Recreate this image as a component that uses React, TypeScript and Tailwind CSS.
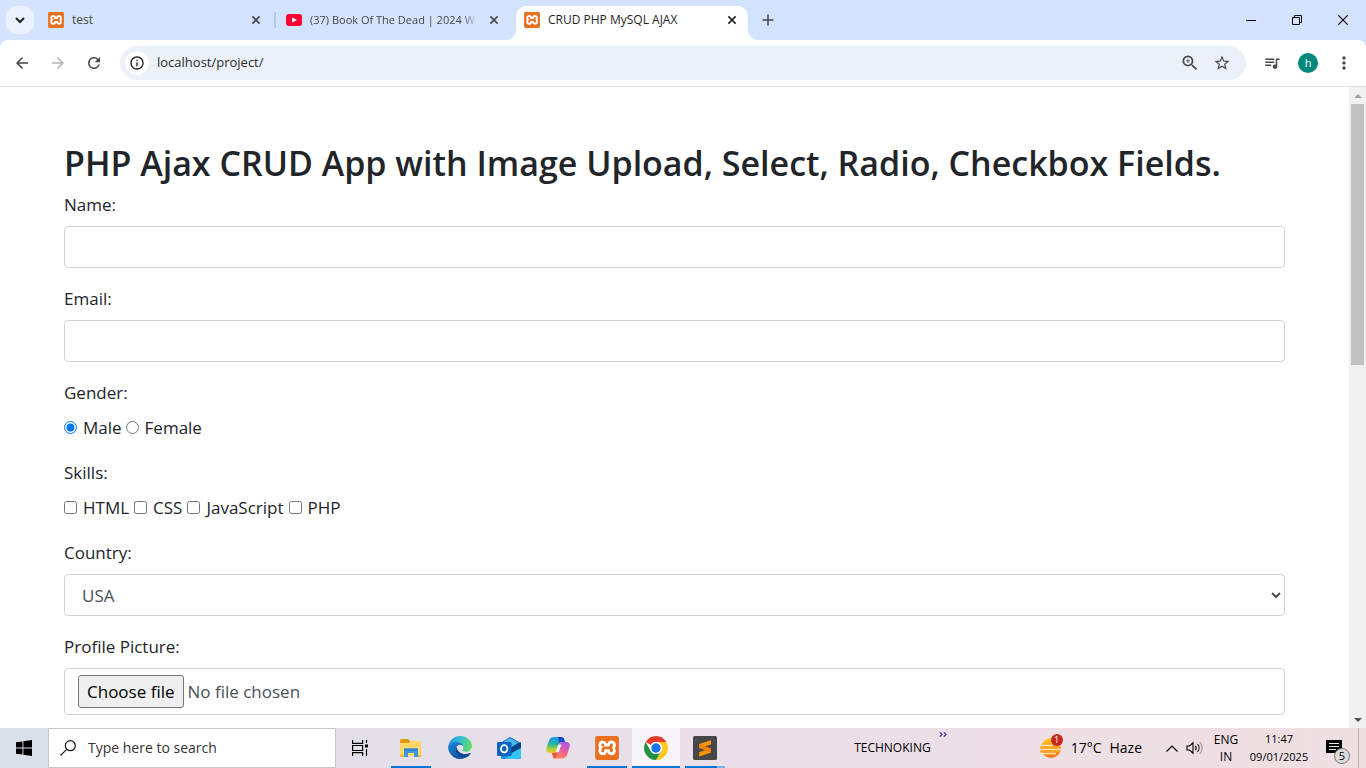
import type { ReactNode } from 'react';
import {
  MdArrowBack,
  MdArrowForward,
  MdMoreVert,
  MdOutlineInfo,
  MdQueueMusic,
  MdRefresh,
  MdStarBorder,
  MdZoomIn,
} from 'react-icons/md';
import { SiXampp } from 'react-icons/si';

/* ---------- Icons ---------- */

function XamppIcon({ large = false }: { large?: boolean }) {
  return (
    <span className={large ? 'flex size-6 rounded-sm bg-white' : 'flex size-4 rounded-sm bg-white'}>
      <SiXampp className="size-full text-[#e8701f]" />
    </span>
  );
}

function YoutubeIcon() {
  return (
    <svg viewBox="0 0 16 16" className="size-4">
      <rect x="0" y="2" width="16" height="12" rx="3" fill="#ff0033" />
      <path d="M6.2 5.4 11 8l-4.8 2.6z" fill="#fff" />
    </svg>
  );
}

function CloseIcon() {
  return (
    <svg viewBox="0 0 16 16" className="size-4" fill="none" stroke="currentColor" strokeWidth="1.6">
      <path d="m4.4 4.4 7.2 7.2M11.6 4.4l-7.2 7.2" />
    </svg>
  );
}

function ExplorerIcon() {
  return (
    <svg viewBox="0 0 24 24" className="size-6">
      <path d="M1 4.5A1.5 1.5 0 0 1 2.500 3H9l2 2v4H1z" fill="#e29c0a" />
      <path d="M1 7h9l2-2h9a1.200 1.200 0 0 1 1.200 1.200V20H1z" fill="#ffd766" />
      <path d="M5 12.500h14V21h-4v-4H9v4H5z" fill="#3f97dc" />
      <path d="M5 12.500h14v2.500H5z" fill="#2f86cf" />
      <path d="M1 19h4v2H2a1 1 0 0 1-1-1zM19 19h3.200v1a1 1 0 0 1-1 1H19z" fill="#f3b93a" />
    </svg>
  );
}

function EdgeIcon() {
  return (
    <svg viewBox="0 0 24 24" className="size-6">
      <defs>
        <linearGradient id="edgeTop" x1="0" y1="0.300" x2="1" y2="0.500">
          <stop offset="0" stopColor="#2196dc" />
          <stop offset="0.500" stopColor="#35c1d0" />
          <stop offset="1" stopColor="#66dc5c" />
        </linearGradient>
        <linearGradient id="edgeLow" x1="0" y1="0" x2="0.600" y2="1">
          <stop offset="0" stopColor="#1b8be0" />
          <stop offset="1" stopColor="#0d4fa0" />
        </linearGradient>
      </defs>
      <path d="M.3 10.500C1.200 4.500 6 0 12 0c7 0 12 5 12 10 0 3.500-2.800 5.800-6 5.800-2.500 0-3.600-.8-3.600-1.500 0-.5 1-1 1-2.800 0-2.600-2.800-4.700-6.400-4.700C5.500 6.800 2 8 .3 10.500z" fill="url(#edgeTop)" />
      <path d="M.1 12c0-4.200 4-6 8-6 4.200 0 7.300 2.400 7.300 5.500 0-1.600-1.700-2.700-3.400-2.700-2.500 0-4.200 2.400-4.200 5.400 0 4.800 4.400 8.300 9 7.900A12 12 0 0 1 .1 12z" fill="url(#edgeLow)" />
      <path d="M8.600 10.900c-1 1.200-1.200 2.700-.9 4.500.8 4.500 5 7.500 9.200 6.700 2.500-.8 4.500-2.400 5.700-4.500.3-.5-.1-.8-.6-.6-6.400 2.700-12.900-.7-13.400-6.100z" fill="#0c4a94" />
    </svg>
  );
}

function OutlookIcon() {
  return (
    <svg viewBox="0 0 24 24" className="size-6">
      <path d="M3 7 13 1l10 5.500V12H3z" fill="#1672c4" />
      <path d="M7 5.500 13 2l8 4.500-7 5.500H7z" fill="#4db3ee" />
      <path d="M4 11h10l10-2v12.500a1.500 1.500 0 0 1-1.500 1.500H5.500A1.500 1.500 0 0 1 4 21.500z" fill="#1d8fe0" />
      <path d="M24 11v10.500a1.500 1.500 0 0 1-1.500 1.500H8z" fill="#35c3f2" />
      <path d="M14 11.500 24 6v6l-10 5z" fill="#0a4182" />
      <rect x="0" y="6" width="14.500" height="14" rx="1.200" fill="#0b64bd" />
      <ellipse cx="7.200" cy="12.800" rx="3.200" ry="3.600" fill="none" stroke="#fff" strokeWidth="1.800" />
    </svg>
  );
}

function CopilotIcon() {
  return (
    <svg viewBox="0 0 24 24" className="size-6">
      <defs>
        <linearGradient id="copilotLeft" x1="0.500" y1="0" x2="0.400" y2="1">
          <stop offset="0" stopColor="#1c9af0" />
          <stop offset="0.450" stopColor="#22b5a0" />
          <stop offset="0.750" stopColor="#a8cf3c" />
          <stop offset="1" stopColor="#f5c62a" />
        </linearGradient>
        <linearGradient id="copilotRight" x1="0.700" y1="0" x2="0.300" y2="1">
          <stop offset="0" stopColor="#a45be8" />
          <stop offset="0.500" stopColor="#ee5c9c" />
          <stop offset="1" stopColor="#fb8a4a" />
        </linearGradient>
      </defs>
      <path d="M8 1h7.500c1.500 0 2.300 1 2.700 2.400L19 6h-3.500c-1.500 0-2 .8-2.500 2.300l-2 6C10.300 16 9.500 17 8 17H3.500C.8 17-.3 15 .4 12.200L3 4.500C3.800 2.200 5.500 1 8 1z" fill="url(#copilotLeft)" />
      <path d="M12 1h3.500c1.500 0 2.300 1 2.700 2.400L19 6h-3.500c-1.300 0-1.900.6-2.300 1.700z" fill="#1b49c8" />
      <path d="M16 22.500H9.500c-1.600 0-2.300-1-2.700-2.400L6 17h2.500c1.500 0 2.200-1 2.700-2.500l2.100-6.200C13.800 6.800 14.500 6 16 6h4.500c2.800 0 3.800 2.200 3.100 5L21 19c-.9 2.300-2.500 3.500-5 3.500z" fill="url(#copilotRight)" />
      <path d="m15.500 8.500-2.800 7.800h-3.200l2.800-7.800z" fill="#f6eef4" />
      <path d="M6 17h2.500c1.300 0 2-.7 2.500-1.900l-1 7.400c-1.800 0-2.800-.9-3.200-2.400z" fill="#f0553e" />
    </svg>
  );
}

function ChromeIcon() {
  return (
    <svg viewBox="0 0 24 24" className="size-6">
      <circle cx="12" cy="12" r="12" fill="#fff" />
      <path d="M12 0a12 12 0 0 1 10.390 6H12a6 6 0 0 0-5.200 3L1.610 6A12 12 0 0 1 12 0z" fill="#e33b2e" />
      <path d="M22.390 6A12 12 0 0 1 12 24l5.200-9A6 6 0 0 0 12 6z" fill="#fcc81f" />
      <path d="M12 24A12 12 0 0 1 1.610 6l5.190 9a6 6 0 0 0 10.400 0z" fill="#229342" />
      <circle cx="12" cy="12" r="6" fill="#fff" />
      <circle cx="12" cy="12" r="4.700" fill="#1a73e8" />
    </svg>
  );
}

function SublimeIcon() {
  return (
    <svg viewBox="0 0 24 24" className="size-6">
      <rect width="24" height="24" rx="1.500" fill="#474747" />
      <path d="M18 4.200v4.300l-6.500 2.100L18 12.700v3.900L6.200 20.400v-4.200l6.300-2.100-6.300-2V8z" fill="#ff9800" />
      <path d="M6.200 8 18 12.300v4.200L6.200 12.100z" fill="#f57f00" />
    </svg>
  );
}

function WeatherIcon() {
  return (
    <svg viewBox="0 0 24 24" className="size-6">
      <defs>
        <linearGradient id="sun" x1="0" y1="0" x2="0" y2="1">
          <stop offset="0" stopColor="#ffc928" />
          <stop offset="1" stopColor="#f2740f" />
        </linearGradient>
      </defs>
      <circle cx="12" cy="12" r="10" fill="url(#sun)" />
      <path d="M1 9.500h13M3 13.500h19M0 17.500h17" stroke="#fbe3a8" strokeWidth="1.300" />
      <path d="M1 11.300h9M1 15.500h19" stroke="#f5a52a" strokeWidth="1.500" />
    </svg>
  );
}

/* ---------- Browser window ---------- */

interface TabProps {
  title: string;
  icon: ReactNode;
  active?: boolean;
  fade?: boolean;
}

function Tab({ title, icon, active = false, fade = false }: TabProps) {
  return (
    <div
      role="tab"
      aria-selected={active}
      className={
        active
          ? 'relative flex h-[34px] w-[232px] items-center gap-2 rounded-t-[10px] bg-white px-2 pb-[6px] text-[#1f1f1f]'
          : 'flex h-[34px] w-[232px] items-center gap-2 px-2 pb-[6px] text-[#474747]'
      }
    >
      {active && (
        <>
          <svg viewBox="0 0 10 10" className="absolute bottom-0 -left-2.5 size-2.5">
            <path d="M10 0v10H0A10 10 0 0 0 10 0z" fill="#fff" />
          </svg>
          <svg viewBox="0 0 10 10" className="absolute -right-2.5 bottom-0 size-2.5">
            <path d="M0 0v10h10A10 10 0 0 1 0 0z" fill="#fff" />
          </svg>
        </>
      )}
      {icon}
      <span
        className={
          fade
            ? 'min-w-0 flex-1 text-[11px] whitespace-nowrap mask-r-from-90%'
            : 'min-w-0 flex-1 text-xs whitespace-nowrap'
        }
      >
        {title}
      </span>
      <button type="button" aria-label={`Close ${title}`}>
        <CloseIcon />
      </button>
    </div>
  );
}

function TabStrip() {
  return (
    <div className="flex h-10 shrink-0 items-start bg-[#d3e3fd]">
      <div className="flex flex-1 items-start pt-1.5 pl-1.5">
        <button
          type="button"
          aria-label="Search tabs"
          className="flex size-7 items-center justify-center rounded-[10px] bg-[#ebf2fe]"
        >
          <svg viewBox="0 0 10 10" className="size-2.5" fill="none" stroke="#1f1f1f" strokeWidth="2">
            <path d="m1 3 4 4 4-4" />
          </svg>
        </button>
        <div role="tablist" className="flex gap-1.5 pl-1.5">
          <Tab title="test" icon={<XamppIcon />} />
          <div className="-mx-1 mt-1.5 h-4 w-0.5 rounded bg-[#a8c7fa]" />
          <Tab title="(37) Book Of The Dead | 2024 W" icon={<YoutubeIcon />} fade />
          <Tab title="CRUD PHP MySQL AJAX" icon={<XamppIcon />} active />
        </div>
        <button type="button" aria-label="New tab" className="ml-1.5 flex size-7 items-center justify-center">
          <svg viewBox="0 0 12 12" className="size-3" stroke="#474747" strokeWidth="1.600">
            <path d="M6 .5v11M.5 6h11" />
          </svg>
        </button>
      </div>
      <div className="flex h-10">
        <button type="button" aria-label="Minimize" className="flex w-[46px] items-center justify-center">
          <svg viewBox="0 0 10 10" className="size-2.5">
            <path d="M0 5h10v1H0z" />
          </svg>
        </button>
        <button type="button" aria-label="Restore" className="flex w-[46px] items-center justify-center">
          <svg viewBox="0 0 10 10" className="size-2.5" fill="none" stroke="#000">
            <path d="M.5 2.500h7v7h-7zM2.500 2.500v-2h7v7h-2" />
          </svg>
        </button>
        <button type="button" aria-label="Close window" className="flex w-[46px] items-center justify-center">
          <svg viewBox="0 0 10 10" className="size-2.5" stroke="#000" strokeWidth="1.100">
            <path d="m0 0 10 10M10 0 0 10" />
          </svg>
        </button>
      </div>
    </div>
  );
}

function ToolButton({ label, children }: { label: string; children: ReactNode }) {
  return (
    <button type="button" aria-label={label} className="flex h-9 w-9 items-center justify-center text-[#474747]">
      {children}
    </button>
  );
}

function Toolbar() {
  return (
    <div className="shrink-0 bg-[#d3e3fd]">
      <div className="flex h-[47px] items-center rounded-t-lg border-b border-[#dfe1e5] bg-white pl-1">
        <ToolButton label="Back">
          <MdArrowBack className="size-[18px]" />
        </ToolButton>
        <ToolButton label="Forward">
          <MdArrowForward className="size-[18px] text-[#b3b3b3]" />
        </ToolButton>
        <ToolButton label="Reload">
          <MdRefresh className="size-[18px]" />
        </ToolButton>
        <div className="ml-2 flex h-[34px] flex-1 items-center rounded-full bg-[#ecf0f9] pr-2 pl-[5px]">
          <button
            type="button"
            aria-label="View site information"
            className="flex size-6 items-center justify-center rounded-full bg-white text-[#1f1f1f]"
          >
            <MdOutlineInfo className="size-4" />
          </button>
          <input
            type="text"
            aria-label="Address and search bar"
            defaultValue="localhost/project/"
            className="ml-2 min-w-0 flex-1 bg-transparent text-[13px] text-[#2b2b2b] outline-none"
          />
          <button type="button" aria-label="Zoom" className="flex w-8 justify-center text-[#474747]">
            <MdZoomIn className="size-5" />
          </button>
          <button type="button" aria-label="Bookmark this tab" className="flex w-8 justify-center text-[#474747]">
            <MdStarBorder className="size-[18px]" />
          </button>
        </div>
        <div className="flex pl-2 pr-1">
          <ToolButton label="Media controls">
            <MdQueueMusic className="size-[18px]" />
          </ToolButton>
          <ToolButton label="Profile">
            <span className="flex size-5 items-center justify-center rounded-full bg-[#00897b] text-[11px] text-white">
              h
            </span>
          </ToolButton>
          <ToolButton label="Menu">
            <MdMoreVert className="size-5" />
          </ToolButton>
        </div>
      </div>
    </div>
  );
}

/* ---------- Page content ---------- */

const fieldClass = 'h-[42px] w-full rounded border border-[#ced4da] bg-white px-[13px] text-[#495057] outline-none';
const labelClass = 'mb-2 block leading-[26px]';

function Choice({ type, name, label, checked }: { type: 'radio' | 'checkbox'; name: string; label: string; checked?: boolean }) {
  return (
    <label className="flex items-center gap-1.5">
      <input type={type} name={name} defaultChecked={checked} className="mb-0.5 size-[13px]" />
      {label}
    </label>
  );
}

function CrudForm() {
  return (
    <form className="flex flex-col gap-[18px] text-[17px] text-[#212529]">
      <div>
        <label htmlFor="name" className={labelClass}>Name:</label>
        <input id="name" type="text" className={fieldClass} />
      </div>
      <div>
        <label htmlFor="email" className={labelClass}>Email:</label>
        <input id="email" type="email" className={fieldClass} />
      </div>
      <fieldset>
        <legend className={labelClass}>Gender:</legend>
        <div className="flex h-7 items-center gap-1">
          <Choice type="radio" name="gender" label="Male" checked />
          <Choice type="radio" name="gender" label="Female" />
        </div>
      </fieldset>
      <fieldset>
        <legend className={labelClass}>Skills:</legend>
        <div className="flex h-7 items-center gap-[5px]">
          <Choice type="checkbox" name="skills" label="HTML" />
          <Choice type="checkbox" name="skills" label="CSS" />
          <Choice type="checkbox" name="skills" label="JavaScript" />
          <Choice type="checkbox" name="skills" label="PHP" />
        </div>
      </fieldset>
      <div>
        <label htmlFor="country" className={labelClass}>Country:</label>
        <select id="country" className={fieldClass}>
          <option>USA</option>
        </select>
      </div>
      <div>
        <label htmlFor="picture" className={labelClass}>Profile Picture:</label>
        <div className="flex h-[47px] items-center gap-1 rounded border border-[#ced4da] px-[13px] text-[#495057]">
          <input id="picture" type="file" className="sr-only" />
          <label
            htmlFor="picture"
            className="flex h-[33px] items-center rounded-[3px] border border-[#767676] bg-[#efefef] px-2 text-black"
          >
            Choose file
          </label>
          <span>No file chosen</span>
        </div>
      </div>
    </form>
  );
}

function Scrollbar() {
  return (
    <div className="flex w-[17px] shrink-0 flex-col bg-[#f1f1f1]">
      <div className="flex h-[17px] items-center justify-center">
        <svg viewBox="0 0 8 4" className="h-1 w-2" fill="#a3a3a3">
          <path d="M4 0 8 4H0z" />
        </svg>
      </div>
      <div className="flex-1 px-0.5">
        <div className="h-[43%] bg-[#c1c1c1]" />
      </div>
      <div className="flex h-[17px] items-center justify-center">
        <svg viewBox="0 0 8 4" className="h-1 w-2" fill="#505050">
          <path d="M4 4 0 0h8z" />
        </svg>
      </div>
    </div>
  );
}

/* ---------- Taskbar ---------- */

interface TaskProps {
  label: string;
  icon: ReactNode;
  state?: 'idle' | 'open' | 'active' | 'stacked';
}

function TaskButton({ label, icon, state = 'idle' }: TaskProps) {
  return (
    <button
      type="button"
      aria-label={label}
      className={state === 'active' ? 'flex w-12 flex-col bg-[#f8f3f6]' : 'flex w-12 flex-col px-1'}
    >
      <span className="flex w-full flex-1 items-center justify-center pt-0.5">{icon}</span>
      <span className="flex h-0.5 w-full">
        {state !== 'idle' && <span className="flex-1 bg-[#0078d7]" />}
        {state === 'stacked' && <span className="w-2 bg-[#76b3e6]" />}
      </span>
    </button>
  );
}

function Taskbar() {
  return (
    <footer className="flex h-10 shrink-0 items-stretch bg-linear-to-r from-[#dadfea] via-[#ebdfe9] to-[#f0dfe2] text-xs text-black">
      <button type="button" aria-label="Start" className="flex w-12 items-center justify-center">
        <svg viewBox="0 0 16 16" className="size-4">
          <path d="M0 2.300 6.500 1.400v6.100H0zM7.400 1.300 16 0v7.500H7.400zM0 8.400h6.500v6.200L0 13.700zM7.400 8.400H16V16l-8.600-1.200z" />
        </svg>
      </button>
      <label className="flex w-72 items-center gap-3 border border-[#c8c8c8] bg-white pl-[11px]">
        <svg viewBox="0 0 16 16" className="size-4" fill="none" stroke="#111" strokeWidth="1.200">
          <circle cx="10.300" cy="5.700" r="5" />
          <path d="M6.700 9.300.5 15.500" />
        </svg>
        <input
          type="text"
          aria-label="Search"
          placeholder="Type here to search"
          className="min-w-0 flex-1 bg-transparent text-[14px] outline-none placeholder:text-[#333]"
        />
      </label>
      <button type="button" aria-label="Task view" className="flex w-12 items-center justify-center">
        <svg viewBox="0 0 18 16" className="h-4 w-[18px]" fill="none" stroke="#000" strokeWidth="1.200">
          <path d="M1.600 0v3.400h10V0M1.600 16v-3.400h10V16M1.600 5.500h10v5h-10zM15.500 0v3M15.500 9v7" />
          <path d="M14 4.500h3v3h-3z" fill="#000" stroke="none" />
        </svg>
      </button>
      <nav aria-label="Pinned apps" className="flex gap-px pl-[3px]">
        <TaskButton label="File Explorer" icon={<ExplorerIcon />} state="open" />
        <TaskButton label="Microsoft Edge" icon={<EdgeIcon />} />
        <TaskButton label="Outlook" icon={<OutlookIcon />} />
        <TaskButton label="Copilot" icon={<CopilotIcon />} />
        <TaskButton label="XAMPP" icon={<XamppIcon large />} state="open" />
        <TaskButton label="Google Chrome" icon={<ChromeIcon />} state="active" />
        <TaskButton label="Sublime Text" icon={<SublimeIcon />} state="stacked" />
      </nav>
      <div className="flex flex-1 items-stretch justify-end">
        <span className="flex items-center">TECHNOKING</span>
        <button type="button" aria-label="More toolbars" className="mr-[92px] flex items-start pt-1 pl-2">
          <svg viewBox="0 0 8 5" className="h-[5px] w-2" fill="none" stroke="#4b3fa0" strokeWidth="1.300">
            <path d="m.8.3 2.200 2.200L.8 4.700M4.800.3 7 2.500 4.800 4.700" />
          </svg>
        </button>
        <button type="button" className="flex items-center gap-2 text-[14px]">
          <span className="relative">
            <WeatherIcon />
            <span className="absolute -top-0.5 right-0 flex size-3 items-center justify-center rounded-full bg-[#c42b1c] text-[9px] text-white">
              1
            </span>
          </span>
          <span>17°C</span>
          <span>Haze</span>
        </button>
        <button type="button" aria-label="Show hidden icons" className="ml-6 flex items-center">
          <svg viewBox="0 0 12 7" className="h-[7px] w-3" fill="none" stroke="#000" strokeWidth="1.200">
            <path d="M.5 6.500 6 1l5.500 5.500" />
          </svg>
        </button>
        <button type="button" aria-label="Volume" className="ml-2 flex items-center">
          <svg viewBox="0 0 18 14" className="h-3.5 w-[18px]" fill="none" stroke="#000" strokeWidth="1.100">
            <path d="M1 5h2.500L7 1.800v10.400L3.500 9H1z" />
            <path d="M9.300 4.800a3.500 3.500 0 0 1 0 4.400M11.500 3a6 6 0 0 1 0 8" />
            <path d="M13.800 1.200a8.500 8.500 0 0 1 0 11.600" stroke="#9a9296" />
          </svg>
        </button>
        <button type="button" className="flex w-11 flex-col items-center justify-center leading-[17px]">
          <span>ENG</span>
          <span>IN</span>
        </button>
        <button type="button" className="flex w-[62px] flex-col items-center justify-center text-[11px] leading-[18px]">
          <span>11:47</span>
          <span>09/01/2025</span>
        </button>
        <button type="button" aria-label="Notifications" className="relative flex w-12 items-center justify-center">
          <svg viewBox="0 0 16 16" className="size-4">
            <path d="M0 0h16v13h-4v3l-3-3H0z" />
            <path d="M3 3.500h10M3 6.500h10M3 9.500h7" stroke="#f1e3e7" strokeWidth="1" />
          </svg>
          <span className="absolute right-2 bottom-1 flex size-4 items-center justify-center rounded-full border border-[#777] bg-[#dcdcdc] text-[11px]">
            5
          </span>
        </button>
        <span className="w-2 border-l border-[#b9aeb4]" />
      </div>
    </footer>
  );
}

export default function App() {
  return (
    <div className="flex h-screen flex-col overflow-hidden bg-white font-['Open_Sans','Noto_Sans',sans-serif]">
      <TabStrip />
      <Toolbar />
      <div className="flex min-h-0 flex-1">
        <main className="min-w-0 flex-1 overflow-hidden px-16 pt-[55px]">
          <h2 className="mb-2 text-[34px] leading-[42px] font-semibold text-[#212529]">
            PHP Ajax CRUD App with Image Upload, Select, Radio, Checkbox Fields.
          </h2>
          <CrudForm />
        </main>
        <Scrollbar />
      </div>
      <Taskbar />
    </div>
  );
}
